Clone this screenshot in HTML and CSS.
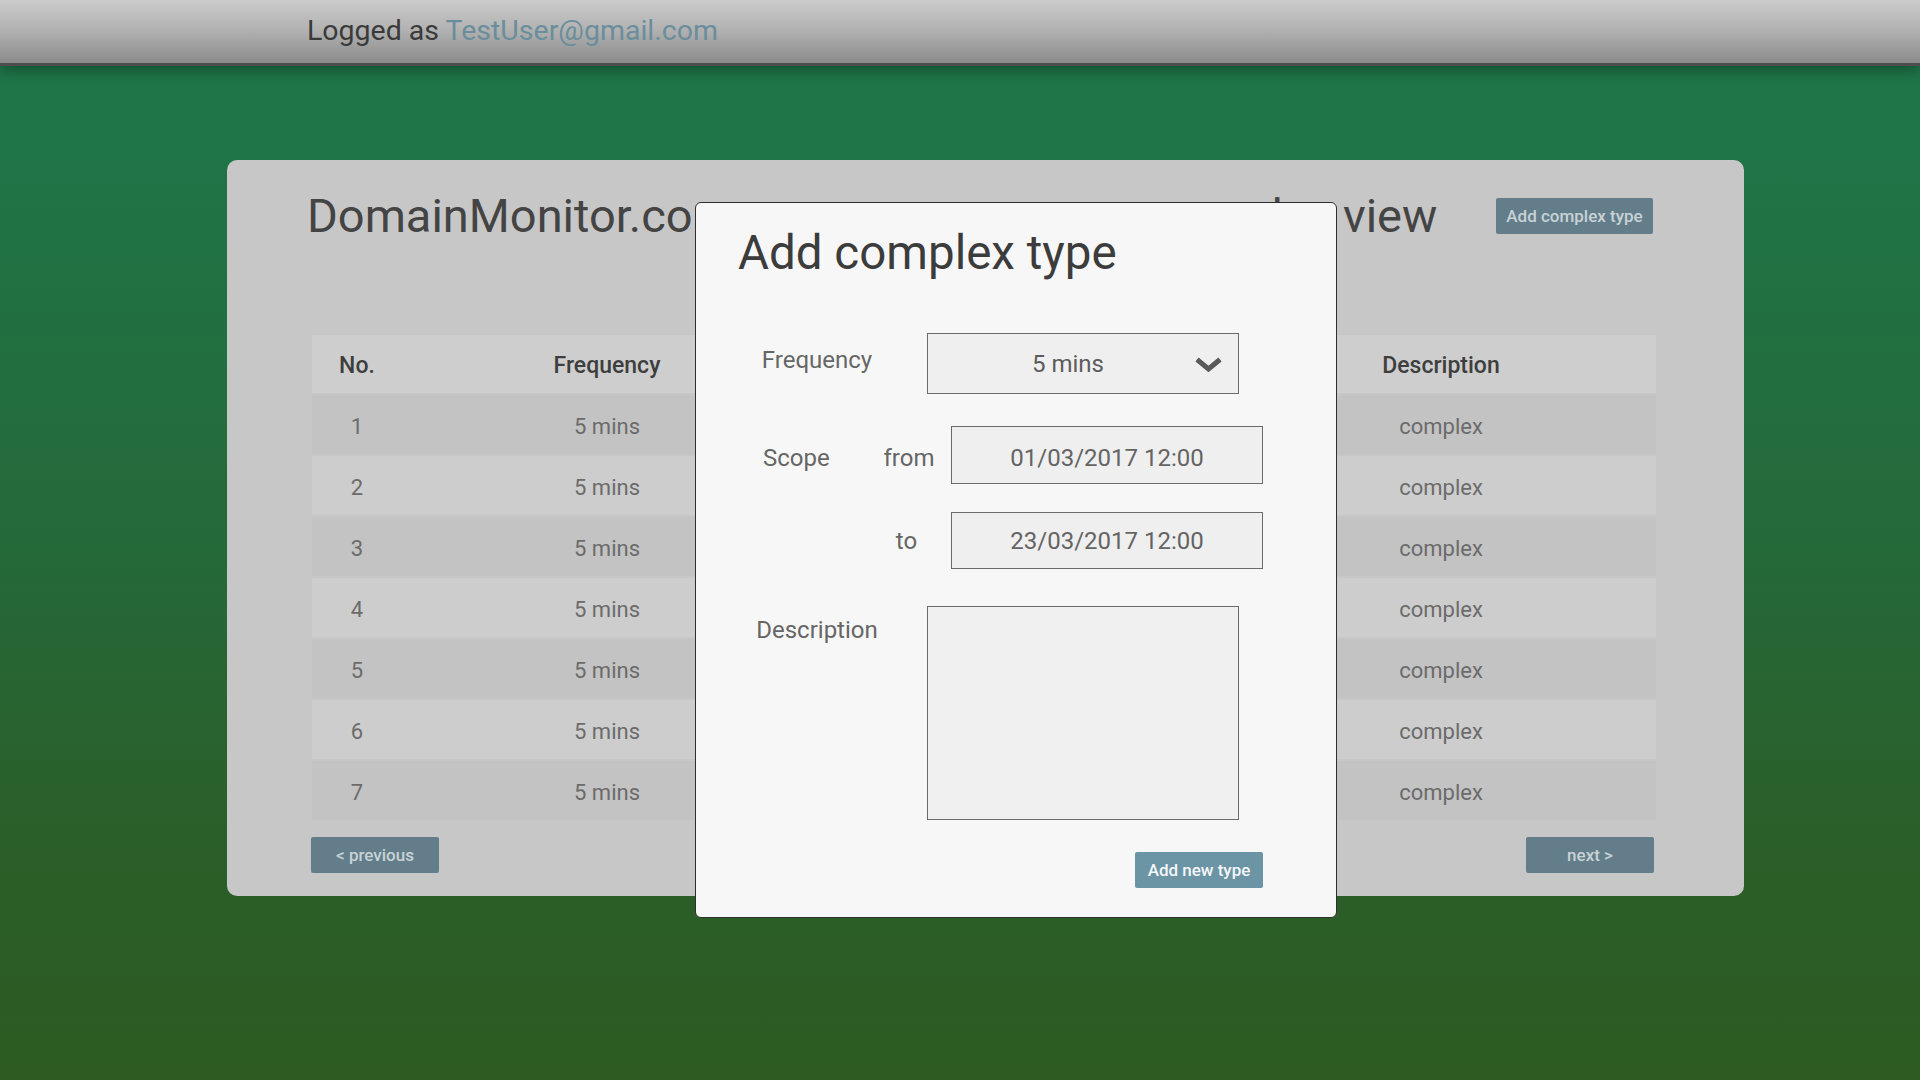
FILE: index.html
```html
<!DOCTYPE html>
<html lang="en">
<head>
<meta charset="utf-8">
<title>DomainMonitor.com</title>
<link rel="stylesheet" href="styles.css">
</head>
<body>
<header class="topbar">
  <span class="logged">Logged as <a class="user" href="#">TestUser@gmail.com</a></span>
</header>

<main class="stage">
  <section class="card">
    <div class="card-head">
      <h1 class="page-title">DomainMonitor.com — server measures complex view</h1>
      <button class="btn btn-muted btn-add">Add complex type</button>
    </div>

    <div class="table">
      <div class="tr th">
        <div>No.</div><div>Frequency</div><div></div><div></div><div>Description</div>
      </div>
      <div class="tr odd"><div>1</div><div>5 mins</div><div></div><div></div><div>complex</div></div>
      <div class="tr even"><div>2</div><div>5 mins</div><div></div><div></div><div>complex</div></div>
      <div class="tr odd"><div>3</div><div>5 mins</div><div></div><div></div><div>complex</div></div>
      <div class="tr even"><div>4</div><div>5 mins</div><div></div><div></div><div>complex</div></div>
      <div class="tr odd"><div>5</div><div>5 mins</div><div></div><div></div><div>complex</div></div>
      <div class="tr even"><div>6</div><div>5 mins</div><div></div><div></div><div>complex</div></div>
      <div class="tr odd"><div>7</div><div>5 mins</div><div></div><div></div><div>complex</div></div>
    </div>

    <div class="pager">
      <button class="btn btn-muted btn-page">&lt; previous</button>
      <button class="btn btn-muted btn-page">next &gt;</button>
    </div>
  </section>
</main>

<div class="modal">
  <h2 class="modal-title">Add complex type</h2>

  <div class="row row-freq">
    <div class="lbl lbl-wide lbl-freq">Frequency</div>
    <div class="select">
      <span class="select-value">5 mins</span>
      <svg class="chev" width="27" height="15" viewBox="0 0 27 15"><polyline points="2,2.5 13.5,12 25,2.5" fill="none" stroke="#595959" stroke-width="5"/></svg>
    </div>
  </div>

  <div class="row row-from">
    <div class="lbl lbl-scope">Scope</div>
    <div class="lbl lbl-sub">from</div>
    <div class="field">01/03/2017 12:00</div>
  </div>

  <div class="row row-to">
    <div class="lbl lbl-scope"></div>
    <div class="lbl lbl-sub lbl-to">to</div>
    <div class="field">23/03/2017 12:00</div>
  </div>

  <div class="row row-desc">
    <div class="lbl lbl-wide lbl-top">Description</div>
    <div class="textarea"></div>
  </div>

  <div class="row row-actions">
    <button class="btn btn-primary">Add new type</button>
  </div>
</div>
</body>
</html>
```

FILE: styles.css
```css
* { box-sizing: border-box; }

html, body {
  margin: 0;
  height: 100%;
}

body {
  position: relative;
  min-height: 1080px;
  font-family: Roboto, "Liberation Sans", sans-serif;
  background: linear-gradient(to bottom, #1f7649 0px, #1f7548 120px, #246a3a 520px, #2b5e28 860px, #2d5b22 1080px);
  overflow: hidden;
}

/* top bar */
.topbar {
  height: 66px;
  display: flex;
  align-items: center;
  padding: 0 0 3px 307px;
  background: linear-gradient(to bottom, #cbcbcb 0%, #b3b3b3 45%, #8b8b8b 100%);
  border-bottom: 3px solid #4d4d4d;
  box-shadow: 0 4px 14px rgba(0, 0, 0, 0.35);
  position: relative;
  z-index: 1;
}

.logged {
  font-size: 28.5px;
  color: #3a3a3a;
}

.user {
  color: #6a8e9c;
  text-decoration: none;
}

/* stage + card */
.stage {
  padding-top: 94px;
}

.card {
  margin-left: 227px;
  width: 1517px;
  height: 736px;
  background: #c7c7c7;
  border-radius: 10px;
  padding: 28px 88px 23px 80px;
}

.card-head {
  display: flex;
  align-items: center;
  justify-content: space-between;
  height: 55px;
}

.page-title {
  margin: 0;
  font-size: 47px;
  font-weight: 400;
  color: #444444;
  white-space: nowrap;
  line-height: 55px;
}

.btn {
  font-family: Roboto, "Liberation Sans", sans-serif;
  border: none;
  border-radius: 2px;
  font-size: 17px;
  font-weight: 500;
  height: 36px;
  padding: 0;
  cursor: pointer;
}

.btn-muted {
  background: #637e8a;
  color: #c8d2d6;
}

.btn-add {
  width: 157px;
  margin-right: 3px;
}

/* table */
.table {
  margin: 92px 0 0 5px;
  width: 1344px;
  display: flex;
  flex-direction: column;
  gap: 2px;
}

.tr {
  display: grid;
  grid-template-columns: 90px 410px 207px 207px 430px;
  align-items: center;
  text-align: center;
  height: 59px;
  font-size: 22px;
  color: #6b6b6b;
}

.tr > div {
  padding-top: 4px;
}

.th {
  height: 58px;
  background: #cecece;
  font-size: 23px;
  font-weight: 500;
  color: #3e3e3e;
}

.th > div {
  padding-top: 2px;
}

.odd { background: #c3c3c3; }
.even { background: #cdcdcd; }

.pager {
  margin: 17px 0 0 4px;
  width: 1343px;
  display: flex;
  justify-content: space-between;
}

.btn-page {
  width: 128px;
}

/* modal */
.modal {
  position: absolute;
  left: 695px;
  top: 202px;
  width: 642px;
  height: 716px;
  background: #f7f7f7;
  border: 1.5px solid #2e2e2e;
  border-radius: 6px;
  padding: 23px 0 0 42px;
  z-index: 5;
}

.modal-title {
  margin: 0;
  font-size: 47.5px;
  font-weight: 400;
  color: #3c3c3c;
  line-height: 55px;
}

.row {
  display: flex;
  align-items: center;
}

.lbl {
  font-size: 24px;
  color: #666666;
  line-height: 28px;
}

.lbl-wide {
  width: 158px;
  text-align: center;
}

.lbl-freq {
  margin-bottom: 8px;
}

.lbl-scope {
  width: 129px;
  padding-left: 25px;
}

.lbl-sub {
  width: 84px;
  text-align: center;
}

.lbl-to {
  padding-right: 5px;
}

.lbl-top {
  align-self: flex-start;
  margin-top: 10px;
}

.row-freq { margin-top: 52px; }
.row-from { margin-top: 32px; }
.row-to { margin-top: 28px; }
.row-desc { margin-top: 37px; align-items: flex-start; }

.row-from .lbl {
  padding-top: 5px;
}

.select {
  margin-left: 31px;
  width: 312px;
  height: 61px;
  background: #efefef;
  border: 1px solid #6b6b6b;
  display: flex;
  align-items: center;
  padding: 0 16px 0 13px;
}

.select-value {
  flex: 1;
  text-align: center;
  font-size: 24px;
  color: #5c5c5c;
}

.chev {
  display: block;
  margin-top: 1px;
}

.field {
  width: 312px;
  height: 58px;
  background: #efefef;
  border: 1px solid #6b6b6b;
  display: flex;
  align-items: center;
  justify-content: center;
  font-size: 24px;
  color: #646464;
}

.row-from .field {
  padding-top: 5px;
}

.row-to .field {
  height: 57px;
}

.textarea {
  margin-left: 31px;
  width: 312px;
  height: 214px;
  background: #f0f0f0;
  border: 1px solid #6b6b6b;
}

.row-actions {
  margin-top: 32px;
  width: 525px;
  justify-content: flex-end;
}

.btn-primary {
  width: 128px;
  background: #6b94a5;
  color: #f5f7f8;
}
```
